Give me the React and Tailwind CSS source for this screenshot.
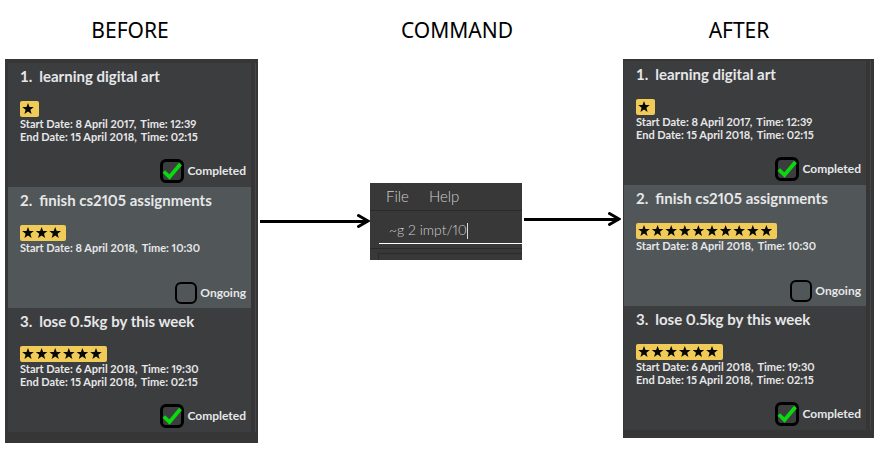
const STAR_PITCH = 13.6;
const STAR = "0,-6 1.5,-2 5.8,-1.9 2.4,0.8 3.6,5 0,2.5 -3.6,5 -2.4,0.8 -5.8,-1.9 -1.5,-2";

const TASKS = [
  {
    name: "learning digital art",
    stars: 1,
    dates: [
      { day: "Start Date: 8 April 2017,", time: "Time: 12:39" },
      { day: "End Date: 15 April 2018,", time: "Time: 02:15" },
    ],
    done: true,
  },
  {
    name: "finish cs2105 assignments",
    stars: 3,
    dates: [{ day: "Start Date: 8 April 2018,", time: "Time: 10:30" }],
    done: false,
  },
  {
    name: "lose 0.5kg by this week",
    stars: 6,
    dates: [
      { day: "Start Date: 6 April 2018,", time: "Time: 19:30" },
      { day: "End Date: 15 April 2018,", time: "Time: 02:15" },
    ],
    done: true,
  },
];

const UPDATED_TASKS = TASKS.map((task, i) => (i === 1 ? { ...task, stars: 10 } : task));

function Rating({ count }) {
  const width = Math.round(count * STAR_PITCH + 5);
  return (
    <svg width={width} height="16" role="img" aria-label={`Importance ${count}`} className="block rounded-[2px] bg-[#f0cb58]">
      {Array.from({ length: count }, (_, i) => (
        <polygon key={i} points={STAR} transform={`translate(${8 + i * STAR_PITCH} 8)`} fill="#080808" />
      ))}
    </svg>
  );
}

function Status({ done }) {
  return (
    <label className="flex items-center gap-[3px] text-[12px] leading-4 font-bold">
      <span className="grid items-center justify-items-center">
        <input
          type="checkbox"
          defaultChecked={done}
          className={`col-start-1 row-start-1 appearance-none rounded-[6px] border-black ${done ? "size-6 border-3" : "size-[22px] border-2"}`}
        />
        {done && (
          <svg viewBox="0 0 24 24" className="pointer-events-none col-start-1 row-start-1 size-6" aria-hidden="true">
            <path d="M3.8 12.5 L9.5 18 L20.5 5" fill="none" stroke="#0bd80f" strokeWidth="3.8" />
          </svg>
        )}
      </span>
      {done ? "Completed" : "Ongoing"}
    </label>
  );
}

function Task({ task, number }) {
  return (
    <li
      className={`flex flex-col pr-[5px] pl-3 ${task.done ? "h-[124px] bg-[#3c3d3f]" : "h-[121px] bg-[#515658]"}`}
    >
      <h3 className="flex gap-[7px] pt-px text-[15px] leading-6 font-bold">
        <span>{number}.</span>
        <span className="proportional-nums">{task.name}</span>
      </h3>
      <div className="pt-[13px]">
        <Rating count={task.stars} />
      </div>
      <div className="text-[11px] leading-[13px] font-bold proportional-nums">
        {task.dates.map(({ day, time }) => (
          <p key={day} className="flex gap-1">
            <span>{day}</span>
            <span>{time}</span>
          </p>
        ))}
      </div>
      <div className="mt-auto flex justify-end pb-1">
        <Status done={task.done} />
      </div>
    </li>
  );
}

function TaskPanel({ tasks, className }) {
  return (
    <section className={`flex shrink-0 gap-1 bg-[#363637] text-[#e6e7e8] ${className}`}>
      <ol className="flex-1">
        {tasks.map((task, i) => (
          <Task key={task.name} task={task} number={i + 1} />
        ))}
      </ol>
      <div className="w-px bg-[#464748]" />
    </section>
  );
}

function Arrow({ className }) {
  return (
    <div className={`flex h-4 min-w-0 items-center ${className}`} aria-hidden="true">
      <div className="h-[3px] flex-1 bg-black" />
      <svg width="14" height="16" viewBox="0 0 14 16" className="-ml-3 shrink-0">
        <path d="M2.5 2.5 L12 8 L2.5 13.5" fill="none" stroke="#000" strokeWidth="3" strokeLinecap="round" />
      </svg>
    </div>
  );
}

function CommandWindow() {
  return (
    <section className="mt-[124px] h-[77px] w-[152px] shrink-0 overflow-hidden bg-[#383838] text-[#cfcfcf]">
      <nav className="flex h-7 items-center gap-5 border-b border-[#2a2a2a] pl-4 text-[15px] font-light">
        <button type="button">File</button>
        <button type="button">Help</button>
      </nav>
      <div className="ml-[9px] flex h-[33px] items-end border-b border-white pb-1 pl-[10px]">
        <input
          aria-label="Command"
          defaultValue="~g 2 impt/10"
          className="[field-sizing:content] bg-transparent p-0 text-[14px] leading-[18px] font-light proportional-nums outline-none"
        />
        <span className="h-4 w-px bg-[#dddddd]" />
      </div>
      <div className="mt-1 border-t border-[#2a2a2a] pt-1 pl-2">
        <div className="h-4 border-t border-l border-[#2a2a2a]" />
      </div>
    </section>
  );
}

export default function App() {
  return (
    <main className="min-h-screen bg-white font-[Lato,sans-serif]">
      <header className="grid h-[59px] grid-cols-[260fr_394fr_170fr] items-center pr-[59px] text-center font-['Noto_Sans',sans-serif] text-[21px] leading-7 text-black">
        <h2>BEFORE</h2>
        <h2>COMMAND</h2>
        <h2>AFTER</h2>
      </header>
      <div className="flex items-start pr-[9px] pl-[5px]">
        <TaskPanel tasks={TASKS} className="w-[253px] pt-1 pr-0.5 pb-[11px] pl-[3px]" />
        <Arrow className="mt-[154px] ml-0.5 flex-[110]" />
        <CommandWindow />
        <Arrow className="mt-[152px] mr-0.5 ml-0.5 flex-[97]" />
        <TaskPanel tasks={UPDATED_TASKS} className="w-[251px] pt-0.5 pr-[3px] pb-2 pl-px" />
      </div>
    </main>
  );
}
